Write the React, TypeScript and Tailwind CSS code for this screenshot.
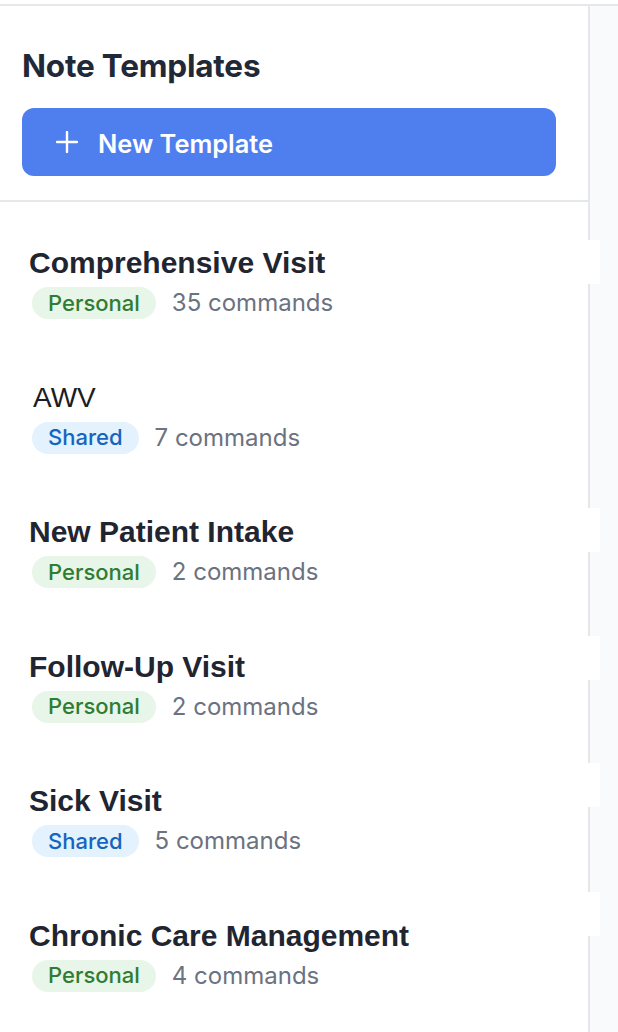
import React from "react";

type Item = { title: string; kind: "Personal" | "Shared"; count: number; plain?: boolean };

const items: Item[] = [
  { title: "Comprehensive Visit", kind: "Personal", count: 35 },
  { title: "AWV", kind: "Shared", count: 7, plain: true },
  { title: "New Patient Intake", kind: "Personal", count: 2 },
  { title: "Follow-Up Visit", kind: "Personal", count: 2 },
  { title: "Sick Visit", kind: "Shared", count: 5 },
  { title: "Chronic Care Management", kind: "Personal", count: 4 },
];

const strips = [240, 508, 636, 763, 892];

export default function App() {
  return (
    <div className="relative w-[618px] h-[1032px] overflow-hidden bg-white pt-[4px]">
      <div className="flex h-full border-t-2 border-[#e5e7eb]">
        <div className="relative w-[590px] shrink-0 border-r-2 border-[#e5e7eb] bg-white">
          <div className="px-[22px] pt-[42px] pb-[24px] border-b-2 border-[#e5e7eb]">
            <h1 className="text-[31.5px] leading-[36px] font-bold text-[#1f2937] font-['Inter',sans-serif] tracking-[-0.2px]">
              Note Templates
            </h1>
            <button className="mt-[24px] flex h-[68px] w-[534px] items-center gap-[20px] rounded-[12px] bg-[#4f7fef] px-[34px] text-white">
              <svg width="22" height="22" viewBox="0 0 22 22" fill="none" stroke="currentColor" strokeWidth="2.4" strokeLinecap="round">
                <path d="M11 1v20M1 11h20" />
              </svg>
              <span className="mt-[3px] text-[25.4px] leading-[30px] font-semibold font-['Inter',sans-serif]">New Template</span>
            </button>
          </div>
          <div className="flex flex-col pt-[43px]">
            {items.map((it) => (
              <div key={it.title} className="flex h-[134.6px] flex-col px-[29px]">
                <div
                  className={
                    it.plain
                      ? "pl-[4px] text-[28px] leading-[36px] font-normal text-[#1a1d23] font-['Liberation_Sans',Arial,sans-serif]"
                      : "text-[30px] leading-[36px] font-bold text-[#1f2531] font-['Liberation_Sans',Arial,sans-serif]"
                  }
                >
                  {it.title}
                </div>
                <div className="mt-[4px] flex items-center gap-[16px] pl-[3px]">
                  <span
                    className={
                      it.kind === "Personal"
                        ? "rounded-full bg-[#e8f5e9] px-[16px] h-[32px] flex items-center text-[22px] font-medium text-[#2e7d32] font-['Inter',sans-serif]"
                        : "rounded-full bg-[#e3f2fd] px-[16px] h-[32px] flex items-center text-[22px] font-medium text-[#1565c0] font-['Inter',sans-serif]"
                    }
                  >
                    {it.kind}
                  </span>
                  <span className="text-[24px] text-[#6b7280] font-['Inter',sans-serif]">{it.count} commands</span>
                </div>
              </div>
            ))}
          </div>
        </div>
        <div className="flex-1 bg-[#f8fafc]" />
      </div>
      {strips.map((y) => (
        <div key={y} className="absolute left-[570px] w-[30px] bg-white" style={{ top: y, height: 44 }} />
      ))}
    </div>
  );
}
